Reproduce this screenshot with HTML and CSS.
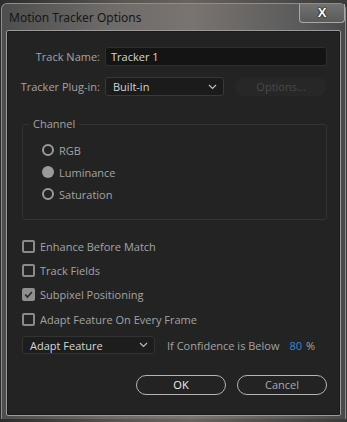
FILE: index.html
```html
<!DOCTYPE html>
<html lang="en">
<head>
    <meta charset="UTF-8">
    <meta name="viewport" content="width=device-width, initial-scale=1.0">
    <title>Motion Tracker Options</title>
    <link rel="stylesheet" href="styles.css">
</head>
<body>
    <div class="window">
        <div class="titlebar">
            <span class="title">Motion Tracker Options</span>
            <div class="close">X</div>
        </div>
        <div class="client">
            <div class="form-row first">
                <label class="row-label">Track Name:</label>
                <div class="text-input">Tracker 1</div>
            </div>
            <div class="form-row">
                <label class="row-label">Tracker Plug-in:</label>
                <div class="select plugin">
                    <span>Built-in</span>
                    <svg class="chevron" width="9" height="6" viewBox="0 0 9 6"><path d="M1 1l3.5 3.5L8 1" fill="none" stroke="#bdbdbd" stroke-width="1.2"/></svg>
                </div>
                <div class="options-btn">Options...</div>
            </div>

            <div class="channel">
                <span class="legend">Channel</span>
                <div class="radio-row"><span class="radio"></span>RGB</div>
                <div class="radio-row"><span class="radio checked"></span>Luminance</div>
                <div class="radio-row"><span class="radio"></span>Saturation</div>
            </div>

            <div class="checks">
                <div class="check-row"><span class="box"></span>Enhance Before Match</div>
                <div class="check-row"><span class="box"></span>Track Fields</div>
                <div class="check-row"><span class="box checked">
                    <svg width="11" height="11" viewBox="0 0 11 11"><path d="M2.2 5.6l2.3 2.4 4.4-5" fill="none" stroke="#2b2b2b" stroke-width="1.6"/></svg>
                </span>Subpixel Positioning</div>
                <div class="check-row"><span class="box"></span>Adapt Feature On Every Frame</div>
            </div>

            <div class="adapt-row">
                <div class="select adapt">
                    <span>Adapt Feature</span>
                    <svg class="chevron" width="9" height="6" viewBox="0 0 9 6"><path d="M1 1l3.5 3.5L8 1" fill="none" stroke="#bdbdbd" stroke-width="1.2"/></svg>
                </div>
                <span class="confidence">If Confidence is Below</span>
                <span class="value">80</span>
                <span class="percent">%</span>
            </div>

            <div class="buttons">
                <div class="btn ok">OK</div>
                <div class="btn">Cancel</div>
            </div>
        </div>
    </div>
</body>
</html>
```

FILE: styles.css
```css
body {
    margin: 0;
    width: 347px;
    height: 422px;
    overflow: hidden;
    background: linear-gradient(90deg, #2c2c2c, #5a5550 35%, #6a625c 55%, #3a3a3a);
    font-family: "Open Sans", "Noto Sans", sans-serif;
    font-size: 11px;
    color: #a3a3a3;
}
.window {
    position: relative;
    margin: 3px 1px 0 1px;
    height: 416px;
    box-sizing: border-box;
    border: 1px solid #8e8e8e;
    border-bottom: none;
    border-radius: 6px 6px 0 0;
    background: linear-gradient(90deg, #4e4e4e, #6d6a68 30%, #7a7470 55%, #5c5c5c 85%, #4a4a4a);
    padding: 0 4px 0 4px;
}
.titlebar {
    display: flex;
    align-items: flex-start;
    height: 26px;
}
.title {
    margin: 5px 0 0 3px;
    font-family: "Noto Sans", sans-serif;
    font-size: 12px;
    color: #161616;
}
.close {
    margin-left: auto;
    margin-right: -4px;
    width: 46px;
    height: 19px;
    box-sizing: border-box;
    border: 1px solid #a8a8a8;
    border-top: none;
    border-radius: 0 0 4px 4px;
    background: linear-gradient(#727272, #5a5a5a);
    color: #fff;
    font-family: "Liberation Sans", sans-serif;
    font-weight: bold;
    font-size: 13px;
    line-height: 17px;
    text-align: center;
    text-shadow: 0 0 2px #000, 0 0 1px #000;
}
.client {
    height: 386px;
    box-sizing: border-box;
    background: #232323;
    border: 1px solid #9c9c9c;
    border-radius: 2px;
    box-shadow: inset 0 0 0 1px #1a1a1a;
    padding: 0 13px 0 15px;
}
.form-row {
    display: flex;
    align-items: center;
    height: 19px;
    margin-top: 11px;
}
.form-row.first {
    margin-top: 16px;
}
.row-label {
    width: 87px;
    margin-left: -9px;
    margin-right: 5px;
    text-align: right;
    white-space: nowrap;
}
.text-input {
    flex: 1;
    height: 19px;
    box-sizing: border-box;
    background: #141414;
    border: 1px solid #2e2e2e;
    border-radius: 3px;
    padding-left: 5px;
    color: #d6d6d6;
    line-height: 17px;
}
.select {
    display: flex;
    align-items: center;
    justify-content: space-between;
    height: 19px;
    box-sizing: border-box;
    background: #1b1b1b;
    border: 1px solid #383838;
    border-radius: 3px;
    padding: 0 6px 0 7px;
    color: #d6d6d6;
}
.select.plugin {
    width: 119px;
}
.options-btn {
    flex: 1;
    height: 19px;
    margin-left: 11px;
    background: #272727;
    border-radius: 10px;
    color: #4a4a4a;
    text-align: center;
    line-height: 19px;
}
.channel {
    position: relative;
    margin-top: 28px;
    height: 96px;
    box-sizing: border-box;
    border: 1px solid #333;
    border-radius: 3px;
    padding: 14px 0 0 19px;
}
.legend {
    position: absolute;
    top: -9px;
    left: 6px;
    padding: 0 4px;
    background: #232323;
}
.radio-row {
    display: flex;
    align-items: center;
    height: 22px;
}
.radio {
    width: 12px;
    height: 12px;
    box-sizing: border-box;
    border: 2px solid #9a9a9a;
    border-radius: 50%;
    margin-right: 5px;
}
.radio.checked {
    border: none;
    background: #9a9a9a;
}
.checks {
    margin-top: 14px;
}
.check-row {
    display: flex;
    align-items: center;
    height: 24.3px;
}
.box {
    display: flex;
    align-items: center;
    justify-content: center;
    width: 13px;
    height: 13px;
    box-sizing: border-box;
    border: 2px solid #8a8a8a;
    border-radius: 2px;
    margin-right: 5px;
}
.box.checked {
    border: none;
    background: #8f8f8f;
}
.adapt-row {
    display: flex;
    align-items: center;
    margin-top: 5px;
    height: 18px;
}
.select.adapt {
    width: 133px;
    height: 18px;
    background: #1d1d1d;
    border-color: #333;
}
.confidence {
    margin-left: 12px;
}
.value {
    margin-left: 10px;
    color: #3b86d4;
}
.percent {
    margin-left: 4px;
}
.buttons {
    display: flex;
    justify-content: flex-end;
    gap: 11px;
    margin-top: 21px;
}
.btn {
    width: 90px;
    height: 20px;
    box-sizing: border-box;
    border: 1px solid #b5b5b5;
    border-radius: 10px;
    text-align: center;
    line-height: 18px;
    color: #a8a8a8;
}
.btn.ok {
    color: #f0f0f0;
}
```
